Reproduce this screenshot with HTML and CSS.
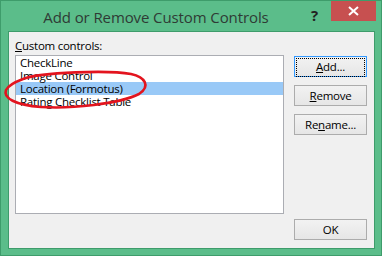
FILE: index.html
```html
<!DOCTYPE html>
<html lang="en">
<head>
  <meta charset="UTF-8">
  <title>Add or Remove Custom Controls</title>
  <link rel="stylesheet" href="styles.css">
</head>
<body>
  <div class="window">
    <div class="titlebar">
      <div class="title">Add or Remove Custom Controls</div>
      <div class="help">?</div>
      <div class="close">
        <svg width="11" height="10" viewBox="0 0 11 10"><path d="M1 1 L10 9 M10 1 L1 9" stroke="#fff" stroke-width="2"/></svg>
      </div>
    </div>
    <div class="client">
      <div class="label"><u>C</u>ustom controls:</div>
      <div class="main">
        <ul class="listbox">
          <li>CheckLine</li>
          <li>Image Control</li>
          <li class="selected">Location (Formotus)</li>
          <li>Rating Checklist Table</li>
        </ul>
        <div class="buttons">
          <button class="btn focused"><span><u>A</u>dd...</span></button>
          <button class="btn"><span><u>R</u>emove</span></button>
          <button class="btn"><span>Re<u>n</u>ame...</span></button>
          <button class="btn ok"><span>OK</span></button>
        </div>
      </div>
    </div>
    <svg class="circle" width="160" height="50" viewBox="0 0 160 50">
      <path d="M22 11 C40 4 108 2 130 6 C144 9 150 18 138 26 C118 36 70 41 40 39 C14 37 2 30 5 22 C7 18 14 14 22 11" fill="none" stroke="#e3141e" stroke-width="2.6"/>
    </svg>
  </div>
</body>
</html>
```

FILE: styles.css
```css
body { margin: 0; width: 383px; height: 257px; background: #fff; font-family: "Open Sans", "Noto Sans", sans-serif; }
.window {
  position: relative; width: 382px; height: 256px; box-sizing: border-box;
  background: #5bbd8a; border: 1px solid #3e9c6b;
  display: flex; flex-direction: column;
}
.titlebar { height: 30px; display: flex; align-items: flex-start; position: relative; }
.title { width: 310px; text-align: center; font-size: 15px; color: #2f3b35; padding-top: 6px; letter-spacing: -0.1px; }
.help { font-size: 15px; font-weight: bold; color: #222; padding-top: 4px; width: 19px; }
.close {
  margin-left: 1px; width: 45px; height: 20px; background: #c75050;
  display: flex; align-items: center; justify-content: center;
}
.client {
  flex: 1; margin: 0 6px 6px 7px; background: #f0f0f0;
  border: 1px solid #3e9c6b; padding: 5px 0 0 6px;
  font-size: 11.5px; letter-spacing: -0.25px; color: #000;
}
.label { height: 17px; line-height: 15px; padding-top: 1px; }
.main { display: grid; grid-template-columns: 269px 73px; column-gap: 10px; height: 185px; }
.listbox {
  margin: 0; padding: 0; list-style: none; height: 159px; box-sizing: border-box;
  background: #fff; border: 1px solid #abadb3;
}
.listbox li { height: 13px; line-height: 13px; padding-left: 4px; white-space: nowrap; }
.listbox li.selected { background: #99c9f7; }
.buttons { display: flex; flex-direction: column; gap: 8px; padding-top: 1px; }
.btn {
  width: 73px; height: 21px; padding: 0; box-sizing: border-box;
  font-family: inherit; font-size: 11.5px; letter-spacing: -0.25px; color: #000;
  background: linear-gradient(#f2f2f2, #e6e6e6); border: 1px solid #acacac;
}
.btn span { display: block; margin: 1px; height: 17px; line-height: 16px; border: 1px solid transparent; }
.btn.focused { border-color: #3399ff; }
.btn.focused span { border: 1px dotted #000; }
.btn.ok { margin-top: auto; }
.circle { position: absolute; left: 0; top: 67px; }
```
